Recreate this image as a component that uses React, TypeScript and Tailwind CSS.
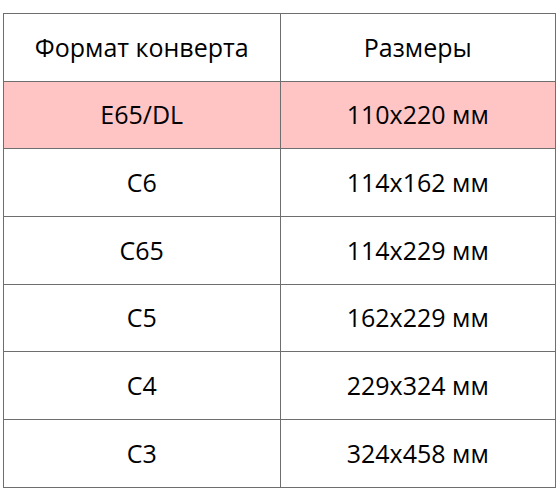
const rows = [
  { format: 'E65/DL', size: '110x220 мм', highlight: true },
  { format: 'C6', size: '114x162 мм' },
  { format: 'C65', size: '114x229 мм' },
  { format: 'C5', size: '162x229 мм' },
  { format: 'C4', size: '229x324 мм' },
  { format: 'C3', size: '324x458 мм' },
]

function Cell({ children, right }: { children: React.ReactNode; right?: boolean }) {
  return (
    <div
      className={
        'flex items-center justify-center h-[67.7px] border-t-[1.5px] border-[#6e6e6e] ' +
        (right ? 'border-l-[1.5px]' : '')
      }
    >
      {children}
    </div>
  )
}

export default function App() {
  return (
    <div className="w-[560px] h-[504px] bg-white pt-[13px] pl-[3px]">
      <div
        className="w-[553px] grid grid-cols-2 border-l-[1.5px] border-r-[1.5px] border-b-[1.5px] border-[#6e6e6e] text-[25px] text-black"
        style={{ fontFamily: '"Open Sans", sans-serif' }}
      >
        <Cell>Формат конверта</Cell>
        <Cell right>Размеры</Cell>
        {rows.map((r) => (
          <div key={r.format} className="contents">
            <div className={r.highlight ? 'bg-[#ffc5c5]' : ''}>
              <Cell>{r.format}</Cell>
            </div>
            <div className={r.highlight ? 'bg-[#ffc5c5]' : ''}>
              <Cell right>{r.size}</Cell>
            </div>
          </div>
        ))}
      </div>
    </div>
  )
}
